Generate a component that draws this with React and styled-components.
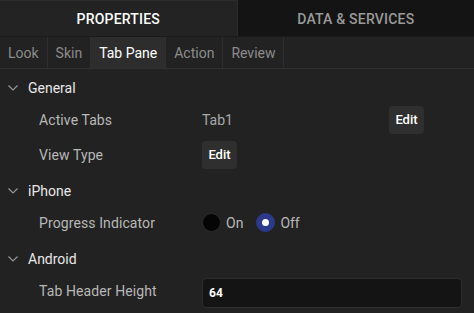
import React from "react";
import styled, { createGlobalStyle } from "styled-components";

const Global = createGlobalStyle`
  html, body { margin: 0; padding: 0; background: #222222; }
  body { font-family: Roboto, "Noto Sans", sans-serif; }
  * { box-sizing: border-box; }
`;

const Page = styled.div`
  width: 474px;
  height: 313px;
  background: #222222;
  overflow: hidden;
  display: flex;
  flex-direction: column;
`;

const TopBar = styled.div`
  display: flex;
  height: 38px;
  border-bottom: 1px solid #1a1a1a;
`;

const TopTab = styled.div`
  flex: 1;
  display: flex;
  align-items: center;
  justify-content: center;
  font-size: 14px;
  font-weight: 500;
  letter-spacing: 0.2px;
  color: ${(p) => (p.$active ? "#ffffff" : "#9a9a9a")};
  background: ${(p) => (p.$active ? "#232323" : "#141414")};
  border-top: 1px solid ${(p) => (p.$active ? "#2c2c2c" : "#141414")};
  border-right: ${(p) => (p.$active ? "1px solid #2c2c2c" : "none")};
`;

const SubBar = styled.div`
  display: flex;
  height: 32px;
  border-bottom: 1px solid #303030;
  background: #222222;
`;

const SubTab = styled.div`
  display: flex;
  align-items: center;
  padding: 0 8px;
  font-size: 14px;
  color: ${(p) => (p.$active ? "#ffffff" : "#8c8c8c")};
  background: ${(p) => (p.$active ? "#2d2d2d" : "transparent")};
  border-right: 1px solid #2e2e2e;
`;

const Body = styled.div`
  padding-top: 5px;
  display: flex;
  flex-direction: column;
`;

const Section = styled.div`
  display: flex;
  flex-direction: column;
  padding-bottom: 5px;
`;

const SectionHeader = styled.div`
  height: 28px;
  display: flex;
  align-items: center;
  gap: 10px;
  padding-left: 8px;
  font-size: 14px;
  color: #e8e8e8;
`;

const Row = styled.div`
  height: 35px;
  display: grid;
  grid-template-columns: 163px 1fr;
  align-items: center;
  padding-left: 39px;
  padding-right: 12px;
`;

const Label = styled.div`
  font-size: 14px;
  letter-spacing: 0.1px;
  color: #b8b8b8;
`;

const Value = styled.div`
  display: flex;
  align-items: center;
  justify-content: ${(p) => (p.$spread ? "space-between" : "flex-start")};
  padding-right: ${(p) => (p.$spread ? "38px" : "0")};
  font-size: 14px;
  color: #a8a8a8;
`;

const EditButton = styled.button`
  height: 28px;
  width: 35px;
  padding: 0;
  border: none;
  border-radius: 4px;
  background: #2f2f2f;
  color: #ffffff;
  font-family: Roboto, sans-serif;
  font-size: 13px;
  font-weight: 500;
`;

const RadioGroup = styled.div`
  display: flex;
  align-items: center;
  gap: 5px;
`;

const Radio = styled.span`
  width: 19px;
  height: 19px;
  border-radius: 50%;
  display: inline-flex;
  align-items: center;
  justify-content: center;
  background: ${(p) => (p.$checked ? "#2b3a8a" : "#050505")};
  border: 1px solid ${(p) => (p.$checked ? "#2b3a8a" : "#2a2a2a")};
  &::after {
    content: "";
    display: ${(p) => (p.$checked ? "block" : "none")};
    width: 7px;
    height: 7px;
    border-radius: 50%;
    background: #ffffff;
  }
`;

const RadioText = styled.span`
  font-size: 14px;
  color: #b8b8b8;
  margin-right: 8px;
`;

const Input = styled.div`
  height: 30px;
  margin-top: 4px;
  width: 260px;
  border: 1px solid #2e2e2e;
  border-radius: 4px;
  background: #141414;
  display: flex;
  align-items: center;
  padding-left: 6px;
  font-size: 12px;
  font-weight: 700;
  color: #ffffff;
`;

const Chevron = () => (
  <svg width="10" height="6" viewBox="0 0 10 6" fill="none">
    <path d="M0.5 0.5 L5 5 L9.5 0.5" stroke="#9a9a9a" strokeWidth="1.1" />
  </svg>
);

export default function App() {
  return (
    <Page>
      <Global />
      <TopBar>
        <TopTab $active>PROPERTIES</TopTab>
        <TopTab>DATA &amp; SERVICES</TopTab>
      </TopBar>
      <SubBar>
        <SubTab>Look</SubTab>
        <SubTab>Skin</SubTab>
        <SubTab $active>Tab Pane</SubTab>
        <SubTab>Action</SubTab>
        <SubTab>Review</SubTab>
      </SubBar>
      <Body>
        <Section>
          <SectionHeader>
            <Chevron />
            General
          </SectionHeader>
          <Row>
            <Label>Active Tabs</Label>
            <Value $spread>
              <span>Tab1</span>
              <EditButton>Edit</EditButton>
            </Value>
          </Row>
          <Row>
            <Label>View Type</Label>
            <Value>
              <EditButton>Edit</EditButton>
            </Value>
          </Row>
        </Section>
        <Section>
          <SectionHeader>
            <Chevron />
            iPhone
          </SectionHeader>
          <Row>
            <Label>Progress Indicator</Label>
            <Value>
              <RadioGroup>
                <Radio />
                <RadioText>On</RadioText>
                <Radio $checked />
                <RadioText>Off</RadioText>
              </RadioGroup>
            </Value>
          </Row>
        </Section>
        <Section>
          <SectionHeader>
            <Chevron />
            Android
          </SectionHeader>
          <Row>
            <Label>Tab Header Height</Label>
            <Value>
              <Input>64</Input>
            </Value>
          </Row>
        </Section>
      </Body>
    </Page>
  );
}
